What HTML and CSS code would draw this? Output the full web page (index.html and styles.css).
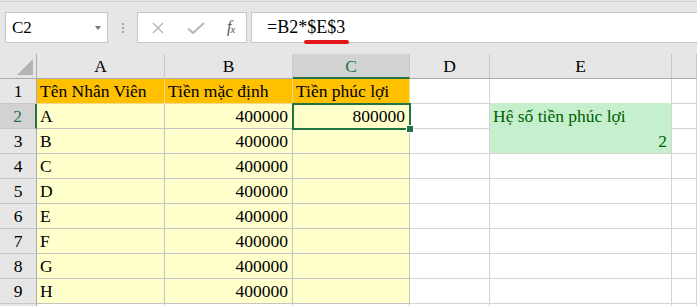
FILE: index.html
```html
<!DOCTYPE html>
<html lang="vi">
<head>
    <meta charset="UTF-8">
    <title>Excel - Tiền phúc lợi</title>
    <link rel="stylesheet" href="styles.css">
</head>
<body>
    <div class="toolbar">
        <div class="namebox">
            <span>C2</span>
            <span class="arrow"></span>
        </div>
        <div class="dots"><i></i><i></i><i></i></div>
        <div class="fxbox">
            <svg class="btn" width="12" height="12" viewBox="0 0 12 12"><path d="M1 1L11 11M11 1L1 11" stroke="#b5b5b5" stroke-width="1.4" fill="none"/></svg>
            <svg class="btn" width="18" height="12" viewBox="0 0 18 12"><path d="M1 6.5L6 11L17 1" stroke="#b5b5b5" stroke-width="2" fill="none"/></svg>
            <span class="fx">f<sub>x</sub></span>
        </div>
        <div class="formula">
            =B2*$E$3
            <span class="mark"></span>
        </div>
    </div>

    <div class="sheet">
        <div class="corner"><span class="tri"></span></div>
        <div class="colhead">A</div>
        <div class="colhead">B</div>
        <div class="colhead active">C</div>
        <div class="colhead">D</div>
        <div class="colhead">E</div>
        <div class="colhead"></div>

        <div class="rowhead">1</div>
        <div class="cell head">Tên Nhân Viên</div>
        <div class="cell head">Tiền mặc định</div>
        <div class="cell head">Tiền phúc lợi</div>
        <div class="cell"></div>
        <div class="cell top-green"></div>
        <div class="cell"></div>

        <div class="rowhead active">2</div>
        <div class="cell data">A</div>
        <div class="cell data num">400000</div>
        <div class="cell data num selected">800000<span class="handle"></span></div>
        <div class="cell"></div>
        <div class="cell good first">Hệ số tiền phúc lợi</div>
        <div class="cell"></div>

        <div class="rowhead">3</div>
        <div class="cell data">B</div>
        <div class="cell data num">400000</div>
        <div class="cell data"></div>
        <div class="cell"></div>
        <div class="cell good num">2</div>
        <div class="cell"></div>

        <div class="rowhead">4</div>
        <div class="cell data">C</div>
        <div class="cell data num">400000</div>
        <div class="cell data"></div>
        <div class="cell"></div>
        <div class="cell"></div>
        <div class="cell"></div>

        <div class="rowhead">5</div>
        <div class="cell data">D</div>
        <div class="cell data num">400000</div>
        <div class="cell data"></div>
        <div class="cell"></div>
        <div class="cell"></div>
        <div class="cell"></div>

        <div class="rowhead">6</div>
        <div class="cell data">E</div>
        <div class="cell data num">400000</div>
        <div class="cell data"></div>
        <div class="cell"></div>
        <div class="cell"></div>
        <div class="cell"></div>

        <div class="rowhead">7</div>
        <div class="cell data">F</div>
        <div class="cell data num">400000</div>
        <div class="cell data"></div>
        <div class="cell"></div>
        <div class="cell"></div>
        <div class="cell"></div>

        <div class="rowhead">8</div>
        <div class="cell data">G</div>
        <div class="cell data num">400000</div>
        <div class="cell data"></div>
        <div class="cell"></div>
        <div class="cell"></div>
        <div class="cell"></div>

        <div class="rowhead">9</div>
        <div class="cell data">H</div>
        <div class="cell data num">400000</div>
        <div class="cell data"></div>
        <div class="cell"></div>
        <div class="cell"></div>
        <div class="cell"></div>

        <div class="rowhead"></div>
        <div class="cell"></div>
        <div class="cell"></div>
        <div class="cell"></div>
        <div class="cell"></div>
        <div class="cell"></div>
        <div class="cell"></div>
    </div>
</body>
</html>
```

FILE: styles.css
```css
body {
    margin: 0;
    background: #e6e6e6;
    font-family: "Liberation Serif", Tinos, "DejaVu Serif", serif;
    color: #000;
    overflow: hidden;
}
.toolbar {
    height: 53px;
    box-sizing: border-box;
    border-top: 1px solid #d0d0d0;
    margin-top: 1px;
    padding-top: 10px;
    display: flex;
    align-items: flex-start;
}
.namebox {
    margin-left: 5px;
    width: 103px;
    height: 31px;
    box-sizing: border-box;
    background: #fff;
    border: 1px solid #c6c6c6;
    display: flex;
    align-items: center;
    justify-content: space-between;
    padding: 0 6px 0 6px;
    font-size: 17px;
}
.arrow {
    width: 0;
    height: 0;
    border-left: 3.5px solid transparent;
    border-right: 3.5px solid transparent;
    border-top: 4px solid #777;
    margin-top: 1px;
}
.dots {
    width: 29px;
    display: flex;
    flex-direction: column;
    align-items: center;
    gap: 2px;
    padding-top: 11px;
}
.dots i {
    width: 2px;
    height: 2px;
    background: #a4a4a4;
}
.fxbox {
    width: 110px;
    height: 31px;
    box-sizing: border-box;
    background: #fff;
    border: 1px solid #c6c6c6;
    display: flex;
    align-items: center;
    padding-left: 14px;
}
.fxbox .btn {
    margin-right: 23px;
}
.fxbox .btn + .btn {
    margin-right: 22px;
}
.fx {
    font-style: italic;
    font-size: 16px;
    color: #555;
    margin-top: -2px;
}
.fx sub {
    font-size: 11px;
    vertical-align: -1px;
    margin-left: -1px;
}
.formula {
    position: relative;
    margin-left: 4px;
    flex: 1;
    height: 31px;
    box-sizing: border-box;
    background: #fff;
    border: 1px solid #c6c6c6;
    border-right: none;
    font-size: 18px;
    line-height: 28px;
    padding-left: 15px;
}
.mark {
    position: absolute;
    left: 52px;
    top: 27px;
    width: 45px;
    height: 4px;
    border-radius: 2px;
    background: #e3161c;
}

.sheet {
    display: grid;
    grid-template-columns: 37px 128px 128px 117px 80px 182px 1fr;
    grid-auto-rows: 25px;
    font-size: 17.5px;
    background: #fff;
}
.sheet > div {
    box-sizing: border-box;
    border-right: 1px solid #d4d4d4;
    border-bottom: 1px solid #d4d4d4;
    line-height: 24px;
    white-space: nowrap;
    position: relative;
}
.sheet .corner {
    background: #e6e6e6;
    border-right-color: #ababab;
    border-bottom-color: #ababab;
}
.tri {
    position: absolute;
    right: 3px;
    bottom: 3px;
    width: 0;
    height: 0;
    border-left: 16px solid transparent;
    border-bottom: 16px solid #b4b4b4;
}
.sheet .colhead {
    background: #e6e6e6;
    text-align: center;
    border-right-color: #c8c8c8;
    border-bottom-color: #ababab;
}
.sheet .colhead.active {
    background: #d2d2d2;
    color: #217346;
    border-bottom: 2px solid #217346;
}
.sheet .rowhead {
    background: #e6e6e6;
    text-align: center;
    border-right-color: #ababab;
    border-bottom-color: #c8c8c8;
}
.sheet .rowhead.active {
    background: #d2d2d2;
    color: #217346;
    border-right: 2px solid #217346;
}
.cell {
    padding: 0 4px 0 3px;
}
.sheet .head {
    background: #ffc000;
    border-right-color: #f3d98e;
    border-bottom-color: #f3d98e;
}
.sheet .data {
    background: #ffffcc;
    border-right-color: #c4c4c4;
    border-bottom-color: #c4c4c4;
}
.num {
    text-align: right;
}
.sheet .good {
    background: #c6efce;
    color: #006100;
    border-right-color: #d4d4d4;
}
.sheet .good.first {
    border-bottom-color: #c6efce;
}
.sheet .top-green {
    border-bottom-color: #c6efce;
}
.sheet .selected {
    outline: 2px solid #217346;
    outline-offset: -1px;
    z-index: 1;
}
.handle {
    position: absolute;
    right: -5px;
    bottom: -5px;
    width: 6px;
    height: 6px;
    background: #217346;
    border: 1px solid #fff;
}
```
